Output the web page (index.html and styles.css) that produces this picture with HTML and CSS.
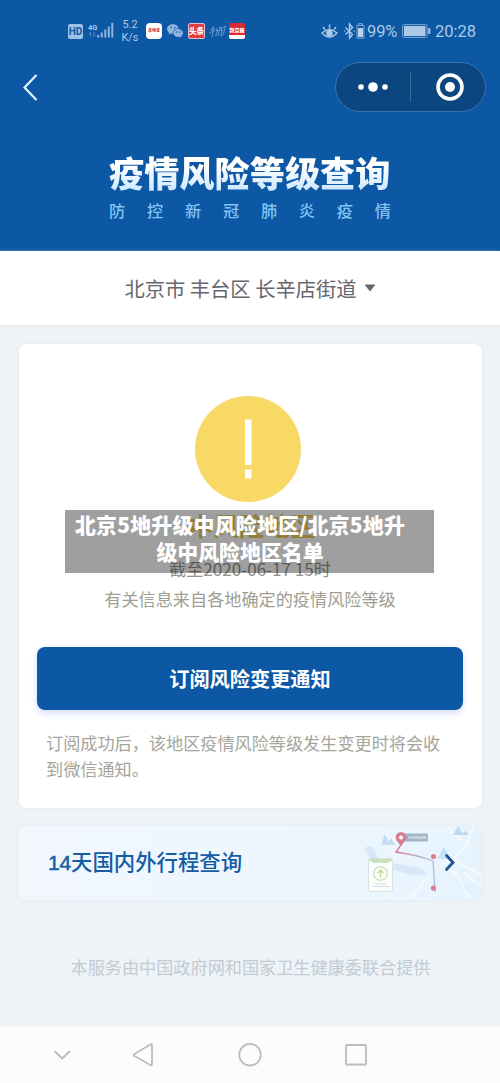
FILE: index.html
```
<!DOCTYPE html>
<html lang="zh-CN">
<head>
<meta charset="utf-8">
<title>疫情风险等级查询</title>
<link rel="stylesheet" href="styles.css">
</head>
<body>
<header class="hero">
  <div class="status">
    <div class="status-left">
      <span class="hd">HD</span>
      <svg class="signal" width="26" height="18" viewBox="0 0 26 18"><text x="0" y="8.500" class="g4">4G</text><path d="M2.500 11.500v4M1 13l1.500-1.500M6 11.500v4M7.500 14L6 15.500" class="arrows"/><path d="M10.200 14v2.500M13.800 11.500v5M17.300 8.500v8M20.800 5.500v11M24.300 2v14.500" class="bars"/></svg>
      <span class="speed">5.2<br>K/s</span>
      <span class="app app-white">本地宝</span>
      <svg class="wechat" width="16" height="14" viewBox="0 0 16 14"><path d="M6 0.3C2.6.3 0 2.4 0 5.1c0 1.5.9 2.8 2.1 3.7L1.6 10.6 3.8 9.5c.6.2 1.3.3 2 .3C5.5 6.700 8.200 4.300 11.500 4.200 11 1.900 8.800.3 6 .3Z"/><path d="M11.200 5C8.400 5 6.300 6.800 6.300 9s2.100 4 4.900 4c.6 0 1.200-.1 1.700-.3l1.700.9-.4-1.500C15.300 11.300 16 10.200 16 9c0-2.200-2.100-4-4.800-4Z"/><g fill="#0c58a5"><circle cx="4" cy="3.600" r=".8"/><circle cx="7.800" cy="3.600" r=".8"/><circle cx="9.700" cy="8" r=".7"/><circle cx="12.800" cy="8" r=".7"/></g></svg>
      <span class="app app-news">头条</span>
      <svg class="script" width="17" height="14" viewBox="0 0 17 14"><path d="M1 6l5-2M4.500 2L3 6M.5 9l5-3-2 3v3l-1.500 1M8.500 4L7 7l2-1-2.500 6M10 4l1.500-1-1 4-2 5M13 3l-1 4 1.500-1-2 6M14 4l2.500-2-2 8-2 2"/></svg>
      <span class="app app-red">新京报</span>
    </div>
    <div class="status-right">
      <svg width="17" height="15" viewBox="0 0 17 15" class="line"><path d="M1 9Q8.500 2 16 9Q8.500 17 1 9ZM8.500 .5v4M2 3l2 2.500M15 3l-2 2.500"/><circle cx="8.500" cy="9" r="2.600" fill="#adc9e8"/></svg>
      <svg class="bt" width="11" height="16" viewBox="0 0 11 16"><path d="M1.500 4.500l7 7L5.500 15V1l3 3.500-7 7M.3 8h1M9.500 8h1"/></svg>
      <svg class="mini" width="9" height="16" viewBox="0 0 9 16"><path d="M2.500 2V.7h4V2M1 2.500h7v12.700H1z" fill="none" stroke="#7fa9d7"/><path d="M2 5h5v9H2z" fill="#b9d2ed"/></svg>
      <span class="pct">99%</span>
      <svg class="battery" width="29" height="14" viewBox="0 0 29 14"><rect x=".6" y=".6" width="24.500" height="12.800" rx="1.500" fill="none" stroke="#7fa9d7"/><rect x="2" y="2" width="21.500" height="10" fill="#adc9e8"/><path d="M27.300 4v6" stroke="#adc9e8" stroke-width="2"/></svg>
      <span class="time">20:28</span>
    </div>
  </div>
  <div class="nav">
    <svg width="16" height="28" viewBox="0 0 16 28" class="back"><path d="M14.500 2L2.500 14.500l12 12.500"/></svg>
    <div class="capsule">
      <svg width="30" height="10" viewBox="0 0 30 10" fill="#fff"><circle cx="3" cy="5" r="2.800"/><circle cx="15" cy="5" r="4.800"/><circle cx="27" cy="5" r="2.800"/></svg>
      <i class="divider"></i>
      <svg width="28" height="28" viewBox="0 0 28 28"><circle cx="14" cy="14" r="12" fill="none" stroke="#fff" stroke-width="3.600"/><circle cx="14" cy="14" r="5" fill="#fff"/></svg>
    </div>
  </div>
  <h1 class="title">疫情风险等级查询</h1>
  <p class="subtitle"><span>防</span><span>控</span><span>新</span><span>冠</span><span>肺</span><span>炎</span><span>疫</span><span>情</span></p>
</header>
<div class="location"><span>北京市 丰台区 长辛店街道</span><svg width="12" height="8" viewBox="0 0 12 8"><path d="M1.500.5h9q1 0 .4.800L6.600 6.700q-.6.600-1.200 0L1.100 1.300Q.5.500 1.500.5Z" fill="#66666e"/></svg></div>
<main class="content">
  <section class="card">
    <svg class="warn" width="106" height="106" viewBox="0 0 106 106"><circle cx="53" cy="53" r="53" fill="#f8d966"/><path d="M50 23.500h6.500v45.500H50zM50 73.500h6.500v9H50z" fill="#fff"/></svg>
    <h2 class="level">中风险地区</h2>
    <p class="date">截至2020-06-17 15时</p>
    <p class="source">有关信息来自各地确定的疫情风险等级</p>
    <button class="subscribe">订阅风险变更通知</button>
    <p class="note">订阅成功后，该地区疫情风险等级发生变更时将会收到微信通知。</p>
    <div class="caption"><span class="caption-first">北京5地升级中风险地区/北京5地升</span><br>级中风险地区名单</div>
  </section>
  <section class="trip">
    <span class="trip-title"><span class="days">14</span>天国内外行程查询</span>
    <svg class="map" width="132" height="74" viewBox="0 0 132 74">
      <defs><linearGradient id="route" x2="1"><stop stop-color="#d9748b"/><stop offset=".35" stop-color="#cf9fb8"/><stop offset=".8" stop-color="#a5bfe0"/></linearGradient><linearGradient id="tree" x2="0" y2="1"><stop stop-color="#b9d7f0"/><stop offset="1" stop-color="#e0effb"/></linearGradient></defs>
      <path d="M14 22q7-4 11 2l4 10 36 7q10 2 11 7-8 2-20 0L42 43Q20 38 14 22Z" fill="#d9e8f9"/>
      <g fill="none" stroke="#f5fafe" stroke-width="1.800"><path d="M92 38l12-5 13-15 6-17M104 33l10 7 18 10M98 42l10 8 12 23M114 47l18 14M98 0l10 12 12 6M60 73l16-20 8-2M35 73l6-15"/></g>
      <g fill="url(#tree)"><path d="M35 8l5 11h-9zM41 12l4 7h-8zM108 0l5 9h-10zM115 5l4 4h-8zM94 21l7 12H87zM58 58l2 5h-4zM74 66l2 4h-4zM116 58l3 5h-5z"/></g>
      <path d="M51 19l-5 7q22 3 37 9l2 31" fill="none" stroke="url(#route)" stroke-width="1.300"/>
      <rect x="52" y="7.500" width="26" height="8" rx="1.500" fill="#a3b2c4"/><text x="58" y="13" class="map-label">14天内途经</text>
      <path d="M51 20l-4-5a5.400 5.400 0 1 1 8 0Z" fill="#d97c90"/><circle cx="51" cy="11.500" r="2" fill="#fff"/>
      <g fill="#dc7c90"><circle cx="83.500" cy="30.500" r="2.600"/><circle cx="83.500" cy="62" r="2.600"/></g>
      <rect x="18.500" y="32.500" width="24" height="33" rx="2" fill="#fcfefd" stroke="#d5e3e6"/><path d="M19 33h23v2q-3 0-4 2H23q-1-2-4-2Z" fill="#c8e3ba"/><circle cx="30.500" cy="47.500" r="6.800" fill="none" stroke="#cfdfb4" stroke-width="1.300"/><path d="M30.500 51.500v-7M27.500 47l3-3 3 3" fill="none" stroke="#bfdc9c" stroke-width="1.500"/><path d="M25 58h12M22 60.500h18" stroke="#d7dbe1"/>
      <path d="M96.500 29.500l6.500 7-6.500 7" fill="none" stroke="#20568f" stroke-width="2.800" stroke-linecap="round"/>
    </svg>
  </section>
  <p class="provider">本服务由中国政府网和国家卫生健康委联合提供</p>
</main>
<footer class="system">
  <svg width="500" height="56" viewBox="0 0 500 56"><path d="M54.500 24l7.700 7.500 7.700-7.500"/><path d="M150.300 17.500q1.700-1 1.700 1v18.500q0 2-1.700 1L134.500 29q-1.500-1 0-2Z"/><circle cx="250" cy="27.700" r="10.800"/><rect x="346" y="18" width="20" height="19.500" rx="1"/></svg>
</footer>
</body>
</html>
```
FILE: styles.css
```
* { box-sizing: border-box; }
body { margin: 0; width: 500px; height: 1083px; display: flex; flex-direction: column; background: #eef3f7; font-family: "Noto Sans CJK SC", sans-serif; overflow: hidden; }
h1, h2, p { margin: 0; }
svg { display: block; flex: none; overflow: visible; }
.hero { height: 251px; flex: none; background: #0c58a5; }
.status { height: 62px; padding: 0 24px 0 68px; display: flex; justify-content: space-between; color: #adc9e8; font-family: Roboto, sans-serif; }
.status-left, .status-right { display: flex; align-items: center; height: 62px; white-space: nowrap; }
.hd { width: 15px; height: 15px; line-height: 15px; border-radius: 2px; background: #a0c1e4; color: #0c58a5; font-size: 10px; font-weight: 700; text-align: center; }
.signal { margin-left: 5px; margin-top: -2px; }
.g4 { font: 700 7.500px Roboto, sans-serif; fill: #adc9e8; }
.bars { stroke: #8fb5df; stroke-width: 2; }
.arrows { stroke: #5c8fc6; fill: none; }
.speed { width: 20px; margin-left: 6px; font-size: 10.800px; line-height: 13px; text-align: center; }
.app { width: 16px; height: 16px; line-height: 15px; border-radius: 2px; overflow: hidden; text-align: center; font-family: "Noto Sans CJK SC", sans-serif; font-weight: 900; }
.app-white { margin-left: 6px; background: #fff; color: #cf4141; font-size: 4px; border-radius: 4px; }
.wechat { margin-left: 5px; fill: #8fb5df; }
.app-news { margin-left: 5px; width: 17px; background: #e43c43; color: #fff; font-size: 7.500px; border: 1px solid #e6bdcb; line-height: 13px; }
.script { margin-left: 4px; fill: none; stroke: #8fb5df; stroke-width: .7; }
.app-red { margin-left: 3px; color: #fff; background: linear-gradient(#db2934 78%, #fff 78%); font-size: 5px; line-height: 13px; }
.line, .bt { fill: none; stroke: #adc9e8; stroke-width: 1.400; }
.bt { margin-left: 6px; }
.mini { margin-left: 1px; }
.pct { margin-left: 2px; font-size: 16.500px; width: 31px; letter-spacing: -.1px; }
.battery { margin-left: 4px; }
.time { margin-left: 4px; font-size: 16.500px; width: 41px; }
.nav { height: 50px; padding: 0 14px 0 22px; display: flex; align-items: center; justify-content: space-between; }
.back { fill: none; stroke: #e4f1ff; stroke-width: 2.200; }
.capsule { width: 151px; height: 50px; border: 1px solid #3d72ad; border-radius: 25px; background: #0c4681; display: flex; align-items: center; padding-left: 22px; }
.divider { width: 1px; height: 30px; margin: 0 25px 0 22px; background: #3f6b9a; }
.title { margin: 40px 0 0 109px; width: 290px; height: 40px; font-size: 35.200px; font-weight: 900; line-height: 40px; white-space: nowrap; background: linear-gradient(#fff 35%, #cfe8ff 95%); -webkit-background-clip: text; background-clip: text; color: transparent; }
.subtitle { display: flex; justify-content: space-between; margin: 8px 109px 0 109px; color: #83c3f4; font-size: 16.200px; font-weight: 500; line-height: 20px; }
.location { height: 74px; flex: none; background: #fff; display: flex; align-items: center; justify-content: center; gap: 7px; padding-bottom: 1px; color: #66666e; font-size: 20.300px; box-shadow: 0 1px 3px #dfe5ea; white-space: nowrap; }
.content { height: 702px; flex: none; padding: 18.500px 18px 0 19px; }
.card { position: relative; height: 464px; background: #fff; border-radius: 8px; box-shadow: 0 0 4px #e3e9ee; padding: 52.500px 19px 0 18px; }
.warn { margin-left: 158px; }
.level { height: 38px; margin: 4px 0 0 151px; color: #e8c75a; font-size: 25.500px; line-height: 38px; }
.date { margin-top: 9.500px; height: 30px; line-height: 30px; font-size: 17.100px; color: #92928a; text-align: center; }
.source { height: 30px; line-height: 30px; font-size: 17.150px; color: #9e9e94; text-align: center; }
.subscribe { display: block; width: 100%; height: 63px; margin-top: 33.500px; border: 0; border-radius: 8px; background: #0c58a5; box-shadow: 0 3px 7px #d5defb; color: #fff; font: 700 20.200px "Noto Sans CJK SC", sans-serif; }
.note { margin: 19.500px 0 0 9px; width: 400px; font-size: 17.150px; line-height: 26.500px; color: #a5a59c; }
.caption { position: absolute; left: 46px; top: 166.500px; width: 369px; height: 63px; padding: 1px 19px 0 0; background: rgba(0, 0, 0, .375); color: #fff; font-size: 20.900px; font-weight: 900; line-height: 26.500px; text-align: center; white-space: nowrap; }
.caption-first { letter-spacing: .25px; }
.trip { height: 74px; margin-top: 18.500px; display: flex; align-items: center; justify-content: space-between; padding-left: 29px; border-radius: 6px; overflow: hidden; background: linear-gradient(90deg, #f1f7fd, #edf6ff 70%, #e6f3fd); box-shadow: 0 0 5px #e1e9f1; }
.trip-title { color: #145ca4; font-size: 21.400px; font-weight: 500; line-height: 30px; padding-bottom: 3px; }
.days { display: inline-block; width: 23px; font-family: "Liberation Sans", sans-serif; font-size: 21px; letter-spacing: -.3px; font-weight: 400; -webkit-text-stroke: .5px #145ca4; }
.map-label { font: 700 3.500px "Noto Sans CJK SC", sans-serif; fill: #e5edf5; }
.provider { margin-top: 52px; line-height: 30px; font-size: 17.150px; color: #c2cbd2; text-align: center; white-space: nowrap; }
.system { height: 56px; flex: none; background: #fcfcfc; }
.system svg { fill: none; stroke: #bdbdbd; stroke-width: 1.800; stroke-linejoin: round; }
```
